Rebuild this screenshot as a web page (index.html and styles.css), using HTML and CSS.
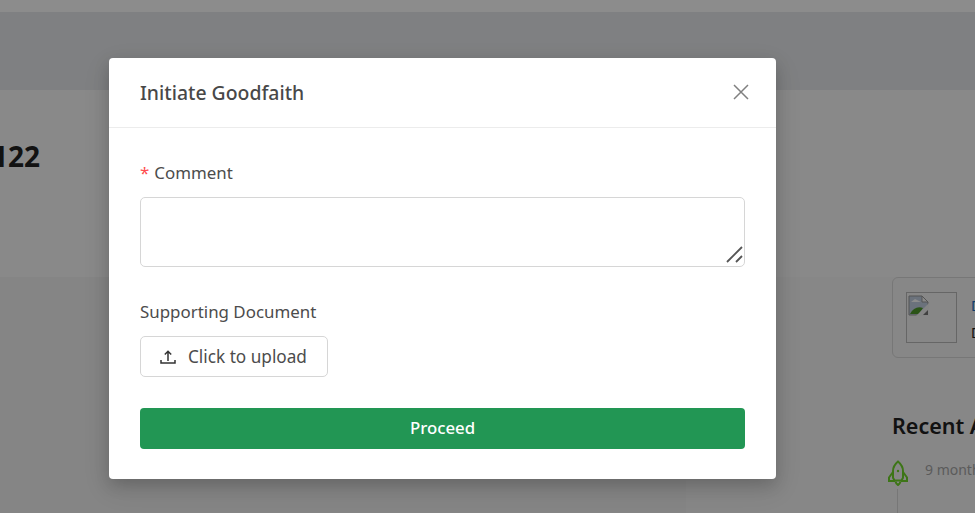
FILE: index.html
```html
<!DOCTYPE html>
<html lang="en">
<head>
    <meta charset="UTF-8">
    <meta name="viewport" content="width=device-width, initial-scale=1.0">
    <title>Initiate Goodfaith</title>
    <link rel="stylesheet" href="styles.css">
</head>
<body>
    <div class="page">
        <div class="topbar"></div>
        <div class="band"></div>
        <div class="hero">
            <h2 class="hero-title">122</h2>
        </div>
        <div class="content">
            <div class="main-col"></div>
            <div class="side-col">
                <div class="doc-card">
                    <div class="doc-thumb">
                        <svg class="broken-img" width="22" height="21" viewBox="0 0 22 21">
                            <path d="M1 1h13l6 6v13H1z" fill="#c3cfe2" stroke="#999"/>
                            <path d="M14 1v6h6z" fill="#fafafa" stroke="#999"/>
                            <path d="M3 7l4-3 6 3z" fill="#fff"/>
                            <path d="M2 19c3-6 8-8 13-6l-4 6z" fill="#4f9a2a"/>
                            <path d="M8 21L21 8v13z" fill="#f2f2f2"/>
                            <path d="M15 20l5-5v5z" fill="#777"/>
                        </svg>
                    </div>
                    <div class="doc-info">
                        <a class="doc-link">Document</a>
                        <span class="doc-meta">Date</span>
                    </div>
                </div>
                <h3 class="activity-title">Recent Activity</h3>
                <div class="activity-row">
                    <svg class="rocket" width="22" height="26" viewBox="0 0 22 26" fill="none" stroke="#6fd62a" stroke-width="2">
                        <path d="M11 1.500c3.500 3 5 6 5 9.500v6.500c0 1-1 1.500-1.500 3h-7c-.5-1.500-1.500-2-1.500-3V11c0-3.500 1.500-6.500 5-9.500z"/>
                        <path d="M6 12l-4 5.500V21h6M16 12l4 5.500V21h-6"/>
                        <path d="M8.500 21.500c.5 2 1.500 3 2.500 3.500 1-.5 2-1.500 2.500-3.500"/>
                        <circle cx="11" cy="11" r="1.200" fill="#6fd62a" stroke="none"/>
                    </svg>
                    <span class="activity-time">9 months ago</span>
                </div>
                <div class="activity-line"></div>
            </div>
        </div>

        <div class="overlay">
            <div class="modal">
                <div class="modal-header">
                    <span class="modal-title">Initiate Goodfaith</span>
                    <svg class="close-icon" width="16" height="16" viewBox="0 0 16 16" stroke="#808080" stroke-width="1.500">
                        <path d="M1 1l14 14M15 1L1 15"/>
                    </svg>
                </div>
                <div class="modal-body">
                    <label class="field-label"><span class="required">*</span>Comment</label>
                    <div class="textarea-wrap">
                        <textarea class="comment-input"></textarea>
                        <svg class="resize-grip" width="17" height="17" viewBox="0 0 17 17" stroke="#555" stroke-width="1.800">
                            <path d="M1 16L16 1M10 16l6-6"/>
                        </svg>
                    </div>
                    <label class="field-label doc-label">Supporting Document</label>
                    <button class="upload-btn">
                        <svg class="upload-icon" width="16" height="16" viewBox="0 0 16 16" fill="none" stroke="#333" stroke-width="1.500">
                            <path d="M8 12V2.500M4.800 5.500L8 2.300l3.200 3.200M1 11v3h14v-3"/>
                        </svg>
                        Click to upload
                    </button>
                    <button class="proceed-btn">Proceed</button>
                </div>
            </div>
        </div>
    </div>
</body>
</html>
```

FILE: styles.css
```css
* {
    box-sizing: border-box;
}
html, body {
    margin: 0;
    height: 100%;
}
body {
    font-family: "Noto Sans", Arial, sans-serif;
    color: #333;
}
.page {
    position: relative;
    width: 975px;
    height: 513px;
    overflow: hidden;
    background-color: #f2f2f2;
}
.topbar {
    height: 12px;
    background-color: #fff;
}
.band {
    height: 78px;
    background-color: #e8eaed;
}
.hero {
    height: 187px;
    padding-top: 46px;
    background-color: #fafafa;
}
.hero-title {
    margin: 0 0 0 -8px;
    font-size: 28px;
    line-height: 40px;
    font-weight: 700;
    color: #222;
}
.content {
    display: flex;
}
.main-col {
    width: 686px;
    height: 236px;
}
.side-col {
    flex: 1;
    min-width: 0;
    height: 236px;
    padding-left: 206px;
    background-color: #f6f6f6;
    white-space: nowrap;
    overflow: hidden;
}
.doc-card {
    display: flex;
    gap: 14px;
    width: 300px;
    height: 81px;
    padding: 14px 13px;
    border: 1px solid #d9d9d9;
    border-radius: 6px;
}
.doc-thumb {
    flex: none;
    width: 51px;
    height: 51px;
    padding: 2px 1px;
    border: 1px solid #bbb;
}
.broken-img {
    display: block;
}
.doc-info {
    display: flex;
    flex-direction: column;
    gap: 7px;
    padding-top: 4px;
    font-size: 14px;
    line-height: 20px;
}
.doc-link {
    color: #1a6fc4;
}
.doc-meta {
    color: #222;
}
.activity-title {
    margin: 53px 0 0;
    font-size: 21.500px;
    line-height: 30px;
    font-weight: 600;
    color: #222;
}
.activity-row {
    display: flex;
    align-items: center;
    gap: 16px;
    margin: 19px 0 0 -5px;
}
.rocket {
    flex: none;
}
.activity-time {
    font-size: 14px;
    line-height: 18px;
    margin-bottom: 6px;
    color: #a6a6a6;
}
.activity-line {
    width: 1px;
    height: 30px;
    margin: 3px 0 0 5px;
    background-color: #d9d9d9;
}
.overlay {
    position: absolute;
    top: 0;
    left: 0;
    width: 100%;
    height: 100%;
    padding: 58px 0 0 109px;
    background-color: rgba(0, 0, 0, 0.45);
}
.modal {
    width: 667px;
    height: 421px;
    background-color: white;
    border-radius: 4px;
    box-shadow: 0 6px 16px rgba(0,0,0,0.16), 0 9px 28px rgba(0,0,0,0.1);
}
.modal-header {
    display: flex;
    align-items: center;
    justify-content: space-between;
    height: 70px;
    padding: 0 27px 0 31px;
    border-bottom: 1px solid #ececec;
}
.modal-title {
    font-size: 19.400px;
    font-weight: 500;
    color: #484848;
}
.close-icon {
    margin-bottom: 2px;
}
.modal-body {
    padding: 33px 31px 0;
}
.field-label {
    display: block;
    font-size: 16.900px;
    line-height: 24px;
    color: #4c4c4c;
}
.required {
    margin-right: 5px;
    color: #ff4d4f;
}
.textarea-wrap {
    position: relative;
    height: 70px;
    margin-top: 12px;
}
.comment-input {
    display: block;
    width: 100%;
    height: 100%;
    border: 1px solid #d6d6d6;
    border-radius: 5px;
    resize: none;
}
.resize-grip {
    position: absolute;
    right: 2px;
    bottom: 4px;
}
.doc-label {
    margin-top: 33px;
}
.upload-btn {
    display: flex;
    align-items: center;
    gap: 12px;
    width: 188px;
    height: 41px;
    margin-top: 12px;
    padding: 0 19px;
    background-color: white;
    border: 1px solid #d6d6d6;
    border-radius: 5px;
    font-family: inherit;
    font-size: 17.200px;
    color: #4c4c4c;
    white-space: nowrap;
}
.upload-icon {
    flex: none;
}
.proceed-btn {
    display: block;
    width: 100%;
    height: 41px;
    margin-top: 31px;
    padding-bottom: 3px;
    background-color: #229654;
    color: white;
    border: none;
    border-radius: 4px;
    font-family: inherit;
    font-size: 16.800px;
    font-weight: 500;
}
```
